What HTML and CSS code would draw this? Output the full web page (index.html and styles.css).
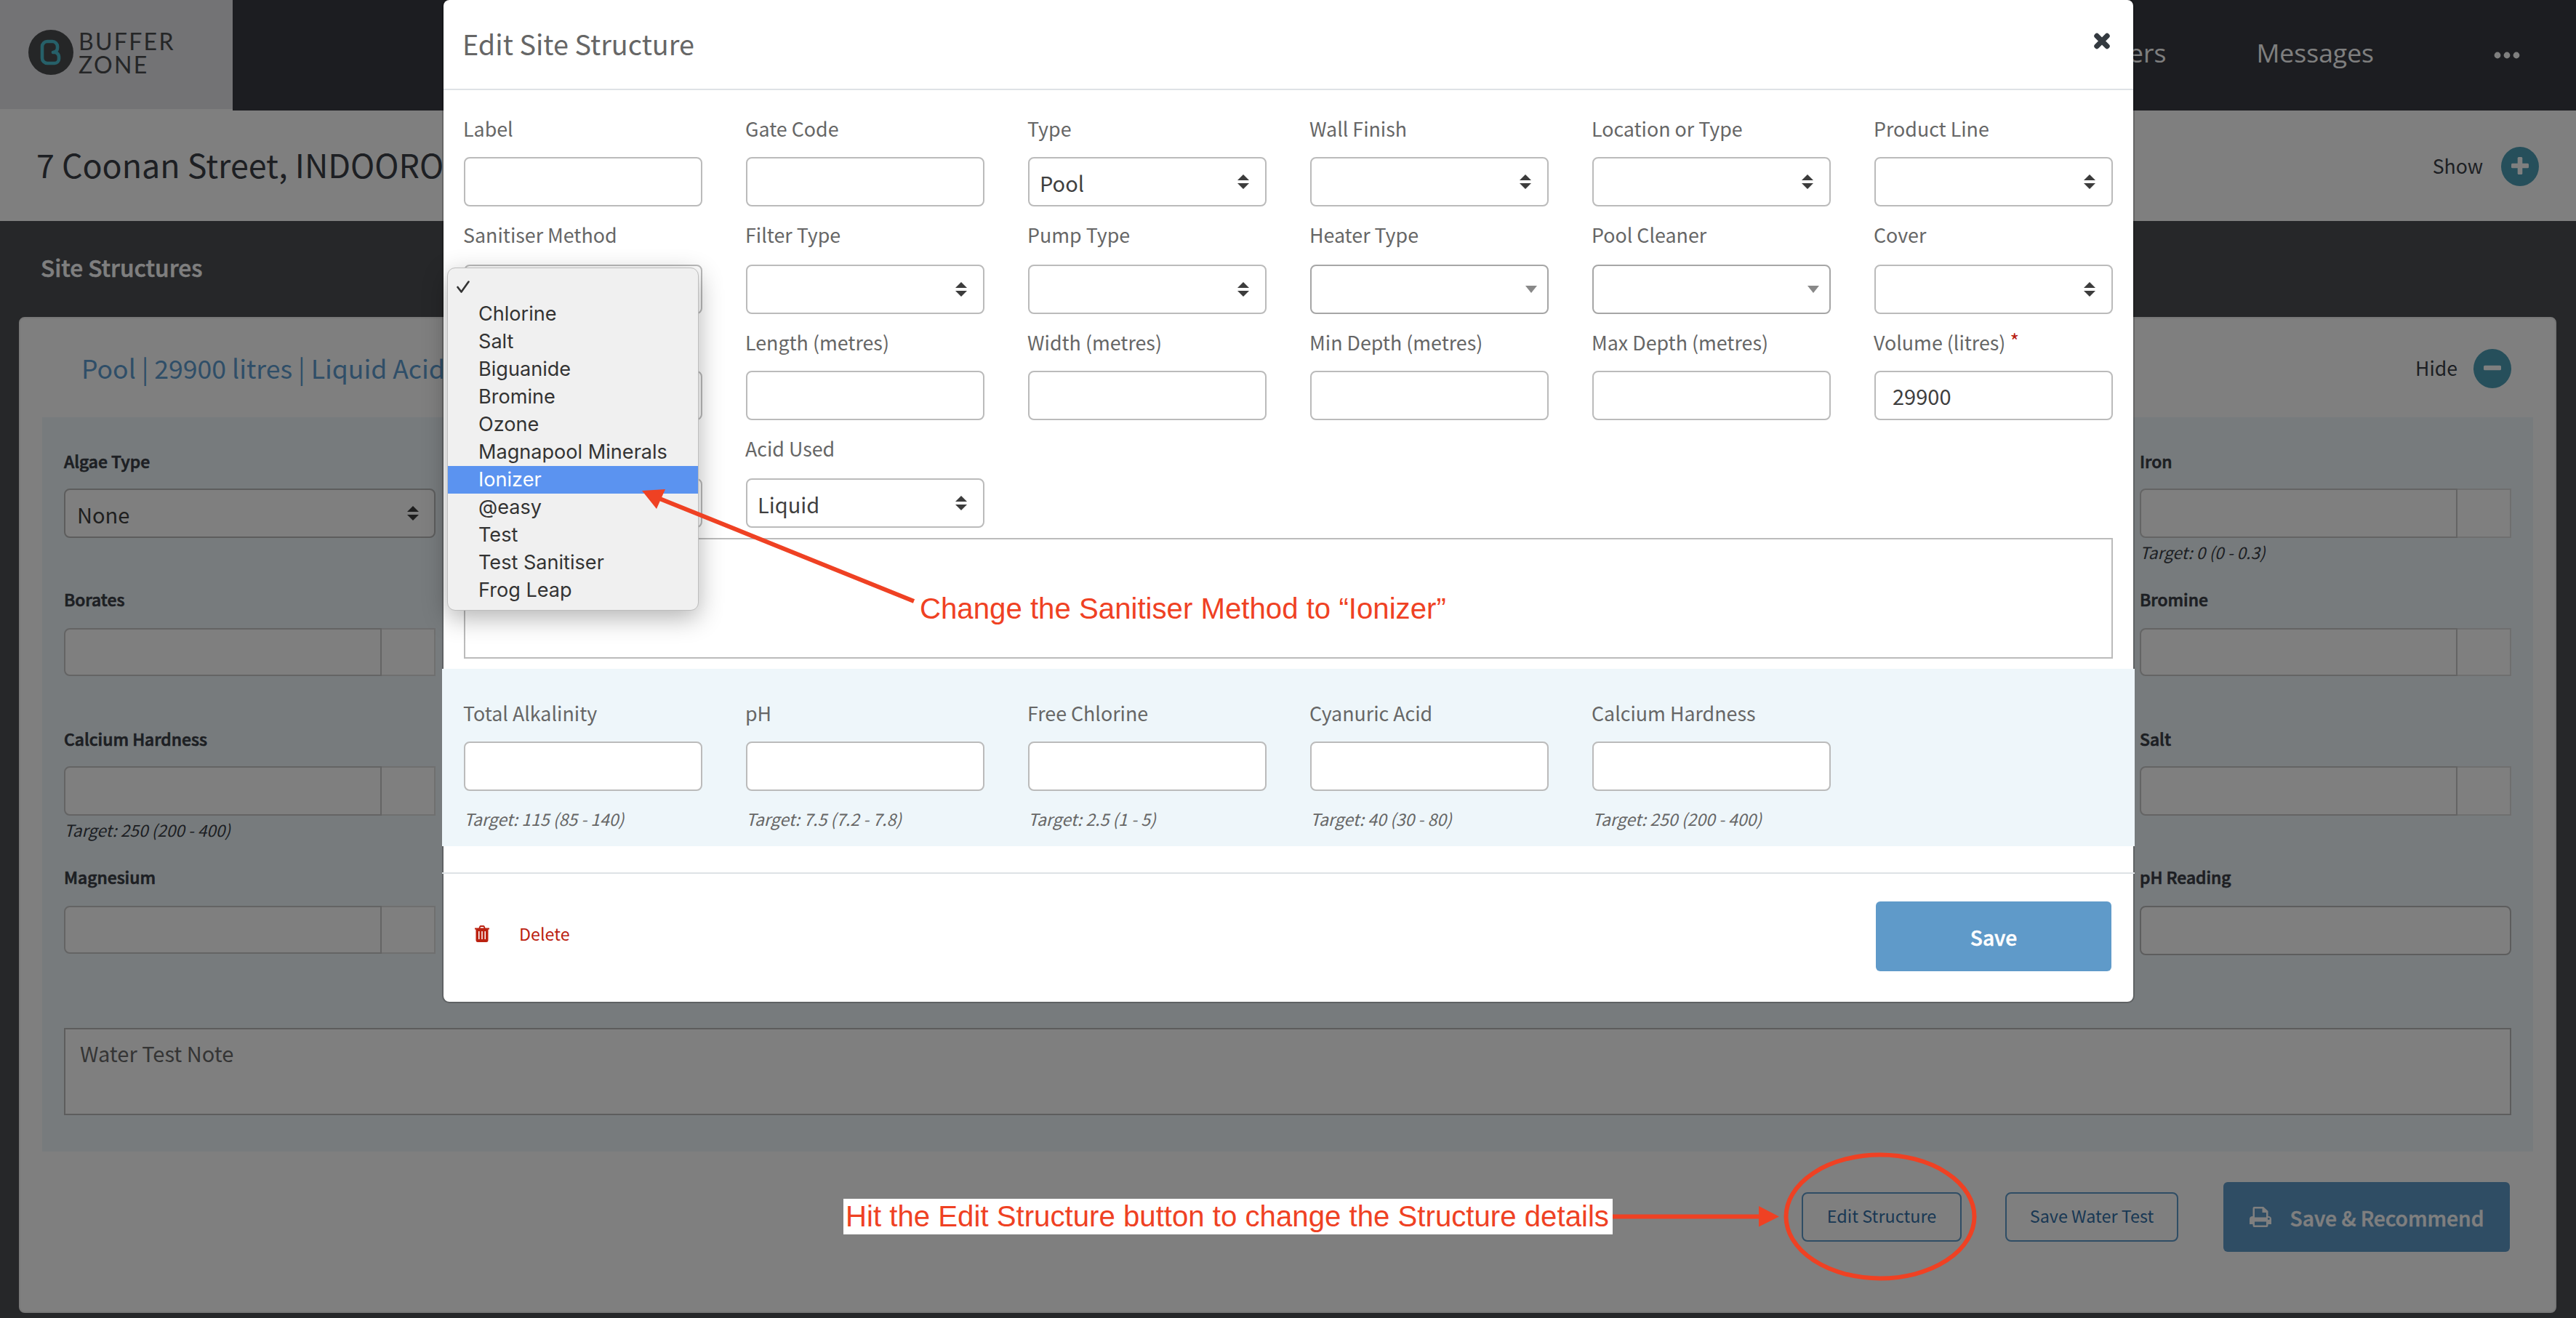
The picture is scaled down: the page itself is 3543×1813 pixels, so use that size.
FILE: index.html
```html
<!DOCTYPE html>
<html lang="en">
<head>
<meta charset="utf-8">
<title>Buffer Zone - Edit Site Structure</title>
<link rel="stylesheet" href="styles.css">
</head>
<body>
<svg width="0" height="0" class="defs">
  <symbol id="updown" viewBox="0 0 16 20"><path d="M8 0l8 8H0zM0 12h16l-8 8z"/></symbol>
</svg>

<div class="page">
  <header class="topbar">
    <div class="logo">
      <svg class="logo-mark" viewBox="0 0 62 62"><circle cx="31" cy="31" r="31" fill="#4a4c4e"/><path d="M34 31h3a7 7 0 0 1 5 6v3a6 6 0 0 1-6 6H26a7 7 0 0 1-7-7V23a7 7 0 0 1 7-7h7a7 7 0 0 1 7 7v2q0 5-6 6" fill="none" stroke="#4cc0d2" stroke-width="4.6" stroke-linecap="round"/></svg>
      <div class="logo-name"><span>BUFFER</span><span>ZONE</span></div>
    </div>
    <nav class="nav">
      <span>Customers</span>
      <span>Messages</span>
      <svg class="dots" viewBox="0 0 36 10"><circle cx="5" cy="5" r="4.4"/><circle cx="18" cy="5" r="4.4"/><circle cx="31" cy="5" r="4.4"/></svg>
    </nav>
  </header>

  <div class="address">
    <h1>7 Coonan Street, INDOOROOPILLY</h1>
    <div class="toggle">Show <svg viewBox="0 0 52 54"><ellipse cx="26" cy="27" rx="26" ry="27" fill="#4c9eb6"/><rect x="14" y="22.700" width="24" height="6.600" rx="1.500" fill="#fff"/><rect x="22.700" y="14" width="6.600" height="24" rx="1.500" fill="#fff"/></svg></div>
  </div>

  <h2 class="section-title">Site Structures</h2>

  <section class="card">
    <div class="card-head">
      <a>Pool | 29900 litres | Liquid Acid</a>
      <div class="toggle">Hide <svg viewBox="0 0 52 54"><ellipse cx="26" cy="27" rx="26" ry="27" fill="#4c9eb6"/><rect x="14" y="22.700" width="24" height="6.600" rx="1.500" fill="#fff"/></svg></div>
    </div>
    <div class="tests">
      <div class="test-row">
        <div class="test"><label>Algae Type</label><div class="box select">None<svg class="updown"><use href="#updown"/></svg></div></div>
        <div class="test last"><label>Iron</label><div class="group"><i></i><b></b></div><em>Target: 0 (0 - 0.3)</em></div>
      </div>
      <div class="test-row even">
        <div class="test"><label>Borates</label><div class="group"><i></i><b></b></div></div>
        <div class="test last"><label>Bromine</label><div class="group"><i></i><b></b></div></div>
      </div>
      <div class="test-row">
        <div class="test"><label>Calcium Hardness</label><div class="group"><i></i><b></b></div><em>Target: 250 (200 - 400)</em></div>
        <div class="test last"><label>Salt</label><div class="group"><i></i><b></b></div></div>
      </div>
      <div class="test-row even">
        <div class="test"><label>Magnesium</label><div class="group"><i></i><b></b></div></div>
        <div class="test last"><label>pH Reading</label><div class="box"></div></div>
      </div>
      <div class="note">Water Test Note</div>
    </div>
    <div class="card-foot">
      <div class="btn outline edit">Edit Structure</div>
      <div class="btn outline water">Save Water Test</div>
      <div class="btn solid recommend">
        <svg viewBox="0 0 30 28"><path fill-rule="evenodd" d="M4.500 13V2Q4.500 0 6.500 0H19l6.500 6v7Q30 13 30 17v7h-4.500v1.500q0 2.500-2 2.500H6.500q-2 0-2-2.500V24H0v-7Q0 13 4.500 13zM7 2.500V14.500h16V8h-5.500V2.500zM7 20.500V25.500h16v-5zM26.300 15a1.500 1.500 0 1 0 .1 0z"/></svg>
        <span>Save &amp; Recommend</span>
      </div>
    </div>
  </section>
</div>

<div class="backdrop"></div>

<div class="modal">
  <div class="modal-head">
    <h3>Edit Site Structure</h3>
    <svg class="close" viewBox="0 0 24 25"><path d="M5 5.500l14 14M19 5.500l-14 14" stroke="#343a40" stroke-width="7.400" stroke-linecap="round"/></svg>
  </div>
  <div class="modal-body">
    <div class="row">
      <div><label>Label</label><div class="box"></div></div>
      <div><label>Gate Code</label><div class="box"></div></div>
      <div><label>Type</label><div class="box select">Pool<svg class="updown"><use href="#updown"/></svg></div></div>
      <div><label>Wall Finish</label><div class="box select"><svg class="updown"><use href="#updown"/></svg></div></div>
      <div><label>Location or Type</label><div class="box select"><svg class="updown"><use href="#updown"/></svg></div></div>
      <div><label>Product Line</label><div class="box select"><svg class="updown"><use href="#updown"/></svg></div></div>
    </div>
    <div class="row even">
      <div><label>Sanitiser Method</label><div class="box"></div></div>
      <div><label>Filter Type</label><div class="box select"><svg class="updown"><use href="#updown"/></svg></div></div>
      <div><label>Pump Type</label><div class="box select"><svg class="updown"><use href="#updown"/></svg></div></div>
      <div><label>Heater Type</label><div class="box combo"><svg viewBox="0 0 16 10"><path d="M0 0h16l-8 10z"/></svg></div></div>
      <div><label>Pool Cleaner</label><div class="box combo"><svg viewBox="0 0 16 10"><path d="M0 0h16l-8 10z"/></svg></div></div>
      <div><label>Cover</label><div class="box select"><svg class="updown"><use href="#updown"/></svg></div></div>
    </div>
    <div class="row third">
      <div><label></label><div class="box"></div></div>
      <div><label>Length (metres)</label><div class="box"></div></div>
      <div><label>Width (metres)</label><div class="box"></div></div>
      <div><label>Min Depth (metres)</label><div class="box"></div></div>
      <div><label>Max Depth (metres)</label><div class="box"></div></div>
      <div><label>Volume (litres) <sup>*</sup></label><div class="box text">29900</div></div>
    </div>
    <div class="row even">
      <div><label></label><div class="box"></div></div>
      <div><label>Acid Used</label><div class="box select">Liquid<svg class="updown"><use href="#updown"/></svg></div></div>
    </div>
    <div class="memo"></div>
  </div>
  <div class="targets row">
    <div><label>Total Alkalinity</label><div class="box"></div><em>Target: 115 (85 - 140)</em></div>
    <div><label>pH</label><div class="box"></div><em>Target: 7.5 (7.2 - 7.8)</em></div>
    <div><label>Free Chlorine</label><div class="box"></div><em>Target: 2.5 (1 - 5)</em></div>
    <div><label>Cyanuric Acid</label><div class="box"></div><em>Target: 40 (30 - 80)</em></div>
    <div><label>Calcium Hardness</label><div class="box"></div><em>Target: 250 (200 - 400)</em></div>
  </div>
  <div class="modal-foot">
    <div class="delete">
      <svg viewBox="0 0 20 23"><path fill-rule="evenodd" d="M0 3.500h5.500L6.500 1Q7 0 8 0h4q1 0 1.500 1l1 2.500H20v2h-1.500V20q0 3-2.500 3H4q-2.500 0-2.500-3V5.500H0zM7.500 3.500h5L12 2H8zM5 8v11h1.500V8zm4.250 0v11h1.500V8zm4.250 0v11H15V8z"/></svg>
      <span>Delete</span>
    </div>
    <div class="btn solid save">Save</div>
  </div>
</div>

<ul class="menu">
  <li><svg viewBox="0 0 18 17"><path d="M1.500 9l5 6.500L16.500 1.500" fill="none" stroke="#333" stroke-width="2.600" stroke-linecap="round" stroke-linejoin="round"/></svg></li>
  <li>Chlorine</li>
  <li>Salt</li>
  <li>Biguanide</li>
  <li>Bromine</li>
  <li>Ozone</li>
  <li>Magnapool Minerals</li>
  <li class="active">Ionizer</li>
  <li>@easy</li>
  <li>Test</li>
  <li>Test Sanitiser</li>
  <li>Frog Leap</li>
</ul>

<svg class="marks" viewBox="0 0 3543 1813">
  <g fill="none" stroke="#ef4123" stroke-width="6">
    <path d="M1257 827L905 685"/>
    <path d="M2218 1673.500H2422"/>
    <ellipse cx="2586" cy="1673.500" rx="129.500" ry="85"/>
  </g>
  <path d="M883 675l32-2-12 27zM2419 1659l28 14.500-28 14z" fill="#ef4123"/>
</svg>
<div class="callout pick">Change the Sanitiser Method to “Ionizer”</div>
<div class="callout hit">Hit the Edit Structure button to change the Structure details</div>
</body>
</html>
```
FILE: styles.css
```css
* { box-sizing: border-box; margin: 0; padding: 0; }

body {
  position: relative;
  width: 3543px;
  height: 1813px;
  overflow: hidden;
  background: #4c4e52;
  color: #3a3e46;
  font-family: "Noto Sans CJK SC", "Noto Sans", sans-serif;
  font-size: 29px;
  white-space: nowrap;
}
label, em { display: block; }
.defs { position: absolute; }
h1, h2, h3 { font-weight: 400; }

/* Top bar */
.topbar { display: flex; justify-content: space-between; height: 152px; background: #383a42; }
.logo { display: flex; align-items: flex-start; width: 320px; padding: 41px 0 0 39px; background: #e6e6ea; border-bottom: 2px solid #fff; }
.logo-mark { width: 62px; height: 62px; }
.logo-name { display: flex; flex-direction: column; padding-left: 7px; font: 32px/32px Lato, sans-serif; letter-spacing: 2.3px; color: #4a4c4e; }
.nav { display: flex; align-items: center; padding: 0 77px 8px 0; color: #fff; font: 35.500px/48px "Open Sans", "Noto Sans", sans-serif; }
.nav span { margin-right: 124px; }
.nav span + span { margin-right: 165px; }
.dots { width: 36px; height: 10px; margin-top: 8px; fill: #fff; }

/* Address */
.address { display: flex; justify-content: space-between; align-items: center; height: 152px; padding: 0 51px 0 50px; background: #fff; }
.address h1 { font-size: 44.800px; line-height: 148px; padding-bottom: 4px; }
.toggle { display: flex; align-items: center; gap: 25px; font-size: 26.600px; line-height: 54px; }
.toggle svg { width: 52px; height: 54px; margin-top: 2px; }
.section-title { height: 132px; padding-left: 56px; color: #fff; font-size: 31.600px; line-height: 126px; font-weight: 500; -webkit-text-stroke: .5px; }

/* Structure card */
.card { width: 3490px; height: 1370px; margin-left: 26px; background: #fff; border: 2px solid #f0f0f0; border-radius: 8px; }
.card-head { display: flex; justify-content: space-between; align-items: center; height: 136px; padding: 0 60px 0 84px; }
.card-head a { padding-bottom: 2px; font-size: 35.600px; color: #5e9dd0; }
.card-head .toggle { gap: 22px; }
.tests { height: 1010px; margin: 0 30px; padding: 24px 30px 0; background: #eef7fb; }
.test-row { display: grid; grid-template-columns: repeat(6, 511px); column-gap: 60px; height: 142px; margin-bottom: 50px; }
.test-row.even { height: 140px; }
.test.last { grid-column: 6; }
.test label { height: 74px; font-size: 22.900px; line-height: 73px; font-weight: 500; -webkit-text-stroke: .7px; }
.even .test label { line-height: 69px; }
.test em { font-size: 22.600px; line-height: 40px; }
.group { display: flex; height: 68px; }
.group i { width: 437px; background: #fff; border: 2px solid #c8c8c8; border-radius: 8px 0 0 8px; }
.group b { flex: 1; background: #fff; border: 2px solid #dedede; border-left: 0; }
.even .group { height: 66px; }
.note { height: 120px; margin-top: 102px; padding-left: 20px; background: #fff; border: 2px solid #bbb; line-height: 65px; color: #6b6b6b; }
.card-foot { display: flex; justify-content: flex-end; align-items: center; height: 180px; padding-right: 62px; }

.btn { display: flex; align-items: center; justify-content: center; border-radius: 6px; }
.btn.outline { height: 68px; padding-bottom: 4px; border: 2px solid #5e9aca; border-radius: 8px; font-size: 23.400px; color: #3370a8; }
.btn.solid { height: 96px; background: #5f9ac9; color: #fff; font-size: 28.200px; font-weight: 500; -webkit-text-stroke: .5px; }
.edit { width: 220px; margin-right: 60px; }
.water { width: 238px; margin-right: 62px; }
.recommend { width: 394px; gap: 26px; }
.recommend svg { width: 30px; height: 28px; fill: #fff; }
.save { width: 324px; }

/* Form controls */
.box { display: flex; align-items: center; height: 68px; background: #fff; border: 2px solid #bbb; border-radius: 8px; color: #3f3f3f; }
.select { padding: 2px 22px 0 14px; }
.select svg { margin: -2px 0 0 auto; }
.test .select { padding-right: 21px; padding-left: 16px; }
.updown { width: 16px; height: 20px; fill: #3c3c3c; }
.combo { padding-right: 14px; border-color: #a6a6a6; }
.combo svg { width: 16px; height: 10px; margin-left: auto; fill: #888; }
.box.text { padding-left: 23px; }

/* Dialog */
.backdrop { position: absolute; inset: 0; background: rgba(0, 0, 0, .5); }
.modal { position: absolute; left: 608px; top: -2px; width: 2328px; height: 1382px; background: #fff; background-clip: padding-box; border: 2px solid rgba(0, 0, 0, .2); border-radius: 10px; color: #666; }
.modal-head { display: flex; justify-content: space-between; height: 124px; padding: 0 31px 0 26px; border-bottom: 2px solid #dee2e6; }
.modal-head h3 { font-size: 37.800px; line-height: 120px; }
.close { width: 24px; height: 25px; margin-top: 44px; }
.modal-body { padding: 12px 28px 0; }
.row { display: grid; grid-template-columns: repeat(6, 328px); column-gap: 60px; margin-top: 12px; }
.row.third { margin-top: 10px; }
.row label { height: 68px; font-size: 26.800px; line-height: 58px; text-indent: -1px; }
.row.even label { line-height: 53px; }
.row sup { color: #b8200f; font-size: 27px; line-height: 0; vertical-align: 2px; }
.memo { height: 166px; margin-top: 14px; border: 2px solid #bbb; }
.targets { height: 244px; margin: 14px -2px 36px; padding: 32px 30px 0; background: #eef6fa; }
.targets em { font-size: 23px; line-height: 76px; }
.modal-foot { display: flex; justify-content: space-between; margin: 0 -2px; padding: 38px 32px 0 45px; border-top: 2px solid #dee2e6; }
.delete { display: flex; align-items: center; gap: 41px; height: 88px; color: #bb2211; font-size: 23.300px; }
.delete svg { width: 20px; height: 23px; fill: #bb2211; }

/* Open sanitiser menu */
.menu { position: absolute; left: 615px; top: 368px; width: 346px; height: 472px; padding: 6px 0; list-style: none; background: #f0f0f0; border: 1px solid #bdbdbd; border-radius: 11px; box-shadow: 0 10px 34px rgba(0, 0, 0, .3); color: #333; font: 27.100px/38px Inter, sans-serif; }
.menu li { height: 38px; padding-left: 42px; }
.menu li svg { display: block; width: 18px; height: 17px; margin-left: -30px; transform: translateY(11px); }
.menu .active { background: #5b93f0; color: #fff; }

/* Guide annotations */
.marks { position: absolute; left: 0; top: 0; width: 3543px; height: 1813px; }
.callout { position: absolute; color: #ef4123; font: 40.200px/49px "Liberation Sans", Arial, sans-serif; }
.pick { left: 1265px; top: 813px; }
.hit { left: 1160px; top: 1649px; width: 1058px; padding-left: 3px; background: #fff; }
```
